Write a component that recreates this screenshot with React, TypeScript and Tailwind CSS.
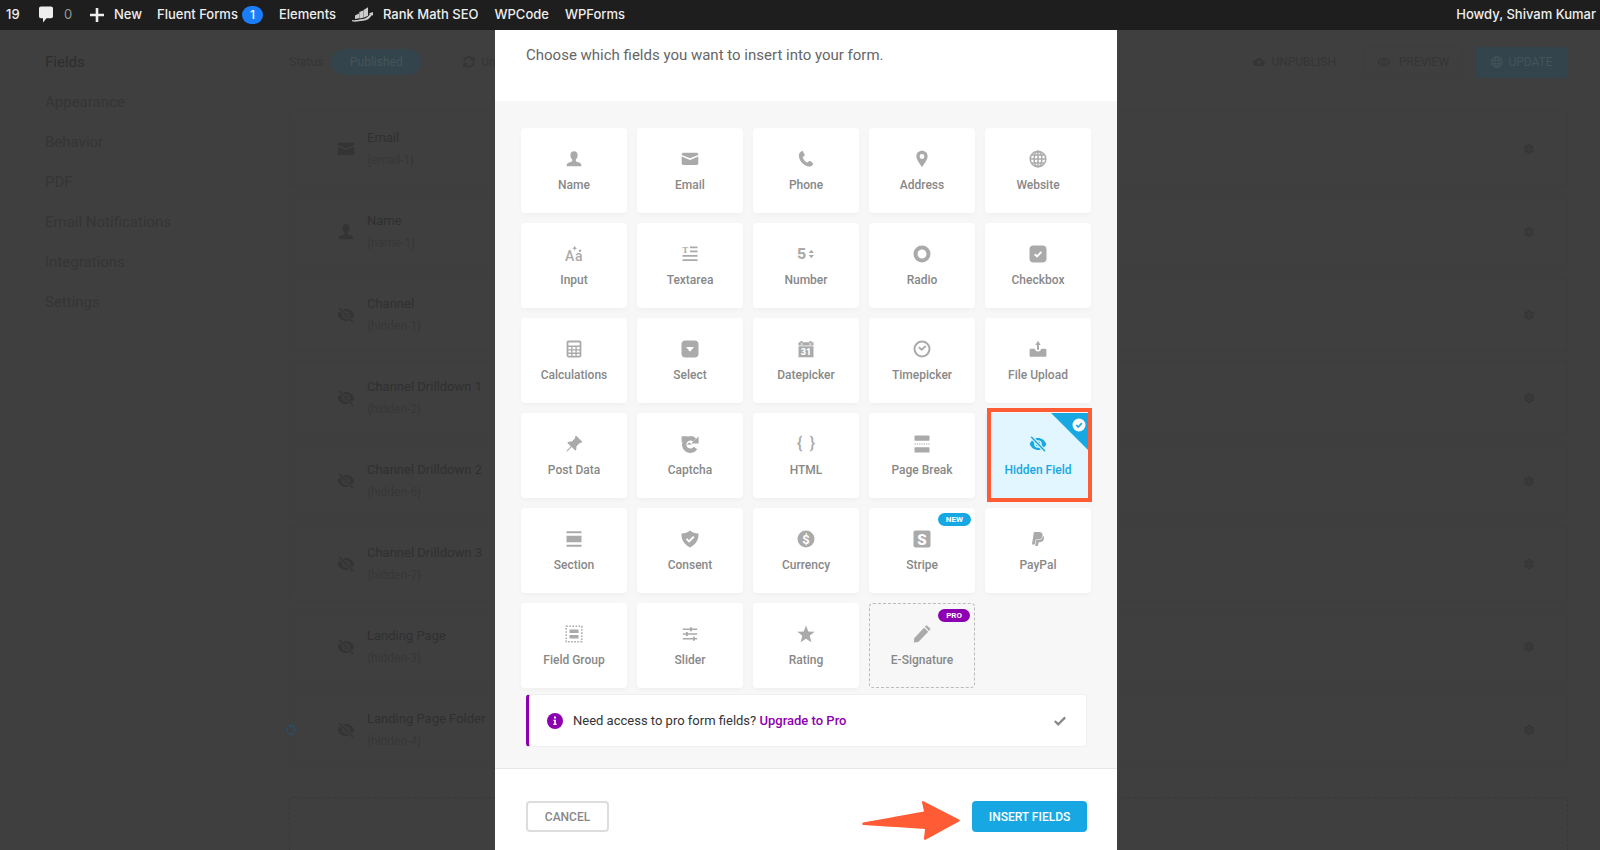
import { useState } from 'react';
import type { ReactNode } from 'react';
import { BsPinAngleFill } from 'react-icons/bs';
import { FaPaypal, FaSyncAlt } from 'react-icons/fa';
import { MdCloudUpload, MdLanguage, MdOutlineRemoveRedEye, MdOutlineSettings, MdOutlineSync } from 'react-icons/md';

// Define types
interface FieldType {
    label: string;
    icon: ReactNode;
    tag?: 'new' | 'pro';
}

interface FormField {
    title: string;
    slug: string;
    icon: ReactNode;
    synced?: boolean;
}

const Icon = ({ children }: { children: ReactNode }) => (
    <svg viewBox="0 0 18 18" className="w-[18px] h-[18px] shrink-0 overflow-visible" fill="currentColor" aria-hidden="true">
        {children}
    </svg>
);

const personIcon = (
    <Icon>
        <path d="M9 1.300c2.200 0 3.600 1.600 3.600 3.900 0 1.700-.7 3.300-1.800 4.300v1.300c0 .5.3.8.8 1l3 1c1.100.4 1.700 1.200 1.700 2.400v1H1.700v-1c0-1.200.6-2 1.700-2.400l3-1c.5-.2.8-.5.8-1V9.500C6.100 8.500 5.400 6.900 5.400 5.200 5.400 2.900 6.800 1.300 9 1.300z" />
    </Icon>
);

const emailIcon = (
    <Icon>
        <path d="M2.500 2.700h13c1 0 1.800.8 1.800 1.700v.6L9 8.300.7 5v-.6c0-.9.8-1.700 1.800-1.700z" />
        <path d="M.7 6.600 9 9.900l8.300-3.300v6.700c0 1-.8 1.800-1.800 1.800h-13c-1 0-1.800-.8-1.800-1.800z" />
    </Icon>
);

const hiddenIcon = (
    <Icon>
        <path
            fillRule="evenodd"
            d="M9 3c3.600 0 6.800 2.300 8.300 6-1.500 3.700-4.700 6-8.300 6S2.200 12.700.7 9C2.200 5.300 5.400 3 9 3zm0 2.200a3.800 3.800 0 1 0 0 7.600 3.800 3.800 0 0 0 0-7.600z"
        />
        <circle cx="9" cy="9" r="2.400" />
        <path d="M2.600 2.200 15.600 15.800" stroke="var(--cut)" strokeWidth="3.600" />
        <path d="M2.600 2.200 15.600 15.800" stroke="currentColor" strokeWidth="1.500" strokeLinecap="round" />
    </Icon>
);

const fieldTypes: FieldType[] = [
    { label: 'Name', icon: personIcon },
    { label: 'Email', icon: emailIcon },
    {
        label: 'Phone',
        icon: (
            <Icon>
                <path d="M4.600 1.200c.6-.3 1.100-.2 1.400.3l1.600 3c.3.600.2 1.100-.3 1.400l-1.200.9c-.3.300-.4.600-.2 1 .7 1.900 2.100 3.600 4 4.600.4.200.8.1 1-.2l1-1c.4-.4.9-.4 1.400-.1l2.400 1.900c.5.400.5.900.2 1.400-1 1.700-2.800 2.500-4.900 2C6.300 15.300 2 10.500 1.900 5.700c0-2 .9-3.700 2.700-4.500z" />
            </Icon>
        ),
    },
    {
        label: 'Address',
        icon: (
            <Icon>
                <path fillRule="evenodd" d="M9 .8c3.200 0 5.600 2.300 5.600 5.500 0 3.700-3.300 7.200-5.600 11-2.300-3.800-5.600-7.300-5.600-11C3.400 3.100 5.800.8 9 .8zm0 3.300a2.400 2.400 0 1 0 0 4.800 2.400 2.400 0 0 0 0-4.800z" />
            </Icon>
        ),
    },
    {
        label: 'Website',
        icon: (
            <Icon>
                <g fill="none" stroke="currentColor" strokeWidth="1.500">
                    <circle cx="9" cy="9" r="7.800" />
                    <ellipse cx="9" cy="9" rx="3.900" ry="7.800" />
                    <path d="M9 1v16M1 9h16M2.300 5h13.400M2.300 13h13.400" />
                </g>
            </Icon>
        ),
    },
    {
        label: 'Input',
        icon: (
            <Icon>
                <text x="0" y="16" fontSize="14" fontFamily="Roboto, sans-serif" fontWeight="500">A</text>
                <text x="10" y="16" fontSize="14" fontFamily="Roboto, sans-serif" fontWeight="500">a</text>
                <path d="m9.700.8.8 1.700 1.700.8-1.700.8-.8 1.700-.8-1.700-1.700-.8 1.700-.8z" />
                <circle cx="15" cy="5.700" r="1.200" />
            </Icon>
        ),
    },
    {
        label: 'Textarea',
        icon: (
            <Icon>
                <text x="1.200" y="7.500" fontSize="9" fontFamily="Liberation Serif, serif" fontWeight="700">T</text>
                <path d="M9 1.500h7.500v1.700H9zM9 5.600h7.500v1.700H9zM1.500 10h15v1.800h-15zM1.500 14.300h15v1.800h-15z" />
            </Icon>
        ),
    },
    {
        label: 'Number',
        icon: (
            <Icon>
                <text x="0" y="14" fontSize="14" fontFamily="Inter, sans-serif" fontWeight="800">5</text>
                <path d="m14.300 4.700 2.600 3.300h-5.200zM14.300 13.300 11.700 10h5.200z" />
            </Icon>
        ),
    },
    {
        label: 'Radio',
        icon: <Icon><circle cx="9" cy="9" r="6.500" fill="none" stroke="currentColor" strokeWidth="4" /></Icon>,
    },
    {
        label: 'Checkbox',
        icon: (
            <Icon>
                <rect x=".5" y=".5" width="17" height="17" rx="4" />
                <path d="m5.700 9.200 2.400 2.300 4.300-4.600" fill="none" stroke="#fff" strokeWidth="1.900" />
            </Icon>
        ),
    },
    {
        label: 'Calculations',
        icon: (
            <Icon>
                <path
                    fillRule="evenodd"
                    d="M3.500.6h11c1 0 1.900.8 1.900 1.800v13.200c0 1-.9 1.800-1.900 1.800h-11c-1 0-1.900-.8-1.900-1.800V2.400c0-1 .9-1.800 1.900-1.800zM3.400 2.400V5.600h11.200V2.400zM3.400 7v2.300h2.700V7zm4.100 0v2.300h2.900V7zm4.300 0v2.300h2.800V7zM3.400 10.600v2h2.700v-2zm4.100 0v2h2.900v-2zm4.300 0v2h2.800v-2zM3.400 13.900v1.900h2.700v-1.900zm4.100 0v1.900h2.900v-1.900zm4.300 0v1.900h2.800v-1.900z"
                />
            </Icon>
        ),
    },
    {
        label: 'Select',
        icon: (
            <Icon>
                <rect x=".5" y=".5" width="17" height="17" rx="4" />
                <path d="M5 7h8l-4 4.700z" fill="#fff" />
            </Icon>
        ),
    },
    {
        label: 'Datepicker',
        icon: (
            <Icon>
                <path fillRule="evenodd" d="M1.500 2.300h2V.9h2v1.400h7V.9h2v1.400h2v3.100h-15zM3.700 3.500v.9h2v-.9zm8.600 0v.9h2v-.9z" />
                <path d="M1.500 6.300h15v11h-15z" />
                <text x="9" y="15" fontSize="9" fontFamily="Roboto, sans-serif" fontWeight="900" textAnchor="middle" fill="#fff">31</text>
            </Icon>
        ),
    },
    {
        label: 'Timepicker',
        icon: (
            <Icon>
                <g fill="none" stroke="currentColor">
                    <circle cx="9" cy="9" r="7.500" strokeWidth="2" />
                    <path d="M5.800 7.200 8.700 9.700l4-3.700" strokeWidth="1.900" />
                </g>
            </Icon>
        ),
    },
    {
        label: 'File Upload',
        icon: (
            <Icon>
                <path d="m9 .8 2.700 4.200H10v4.800H8V5H6.300z" />
                <path d="M1.500 8.800h4.300c.3 1.600 1.500 2.600 3.200 2.600s2.900-1 3.200-2.600h4.300c.5 0 .9.4.9.9v6.100c0 .5-.4.9-.9.9h-15c-.5 0-.9-.4-.9-.9V9.700c0-.5.4-.9.9-.9z" />
            </Icon>
        ),
    },
    { label: 'Post Data', icon: <BsPinAngleFill className="w-[18px] h-[18px]" /> },
    {
        label: 'Captcha',
        icon: (
            <Icon>
                <path d="M14.500 13A6.200 6.200 0 1 1 13.600 5" fill="none" stroke="currentColor" strokeWidth="4.400" />
                <path d="M17.600 1.600v6.800h-7.400zM.6 7.500V1.200h6.300zM5.900 9.800 8.300 7.200l2.400 2.600z" />
            </Icon>
        ),
    },
    {
        label: 'HTML',
        icon: (
            <Icon>
                <text x="0" y="14" fontSize="16" fontFamily="Roboto, sans-serif" fontWeight="500">{'{'}</text>
                <text x="18" y="14" fontSize="16" fontFamily="Roboto, sans-serif" fontWeight="500" textAnchor="end">{'}'}</text>
            </Icon>
        ),
    },
    {
        label: 'Page Break',
        icon: (
            <Icon>
                <rect x="1.500" y=".5" width="15" height="5.300" rx=".6" />
                <rect x="1.500" y="12.200" width="15" height="5.300" rx=".6" />
                <path d="M1.500 9h15" stroke="currentColor" strokeWidth="1.200" strokeDasharray="1.300 1" />
            </Icon>
        ),
    },
    { label: 'Hidden Field', icon: hiddenIcon },
    {
        label: 'Section',
        icon: <Icon><path d="M1.500 1.300h15v1.900h-15zM1.500 5.800h15v6.400h-15zM1.500 14.800h15v1.900h-15z" /></Icon>,
    },
    {
        label: 'Consent',
        icon: (
            <Icon>
                <path d="M9 .4c2.200 2 5 3 8.500 3.100.3 6-2.100 10.800-8.500 14C2.600 14.300.2 9.500.5 3.500 4 3.400 6.800 2.400 9 .4z" />
                <path d="m5.500 8.900 2.600 2.600 4.700-4.900" fill="none" stroke="#fff" strokeWidth="1.900" />
            </Icon>
        ),
    },
    {
        label: 'Currency',
        icon: (
            <Icon>
                <circle cx="9" cy="9" r="8.500" />
                <text x="9" y="13.500" fontSize="13" fontFamily="Roboto, sans-serif" fontWeight="700" textAnchor="middle" fill="#fff">$</text>
            </Icon>
        ),
    },
    {
        label: 'Stripe',
        tag: 'new',
        icon: (
            <Icon>
                <rect x=".5" y=".5" width="17" height="17" rx="2" />
                <text x="9" y="14.500" fontSize="15" fontFamily="Roboto, sans-serif" fontWeight="900" textAnchor="middle" fill="#fff">S</text>
            </Icon>
        ),
    },
    { label: 'PayPal', icon: <FaPaypal className="w-4 h-[18px] py-px" /> },
    {
        label: 'Field Group',
        icon: (
            <Icon>
                <rect x="1.200" y="1.200" width="15.600" height="15.600" fill="none" stroke="currentColor" strokeWidth="1.500" strokeDasharray="1.600 1.500" />
                <path d="M4.500 4.500h9v3.400h-9zM4.500 10.100h9v3.400h-9z" />
            </Icon>
        ),
    },
    {
        label: 'Slider',
        icon: (
            <Icon>
                <path d="M1.800 3.400h14.400V5H1.800zM1.800 8.200h14.400v1.600H1.800zM1.800 13h14.400v1.600H1.800zM9 2.200h1.900v4.100H9zM4.900 7h1.900v4.100H4.900zM12 11.700h1.900v4.100H12z" />
            </Icon>
        ),
    },
    {
        label: 'Rating',
        icon: <Icon><path d="m9 .4 2.300 6 6.300.3-4.900 4 1.700 6.600L9 13.800l-5.400 3.500 1.700-6.600-4.900-4 6.300-.3z" /></Icon>,
    },
    {
        label: 'E-Signature',
        tag: 'pro',
        icon: (
            <Icon>
                <path d="M1.200 13.200 11 2.700l4.200 4.100-9.900 10.300-4.500.5zM11.900 1.800l.9-.9c.5-.5 1.200-.5 1.700 0l2.400 2.400c.5.5.5 1.200 0 1.700l-.9.9z" />
            </Icon>
        ),
    },
];

const formFields: FormField[] = [
    { title: 'Email', slug: '{email-1}', icon: emailIcon },
    { title: 'Name', slug: '{name-1}', icon: personIcon },
    { title: 'Channel', slug: '{hidden-1}', icon: hiddenIcon },
    { title: 'Channel Drilldown 1', slug: '{hidden-2}', icon: hiddenIcon },
    { title: 'Channel Drilldown 2', slug: '{hidden-6}', icon: hiddenIcon },
    { title: 'Channel Drilldown 3', slug: '{hidden-7}', icon: hiddenIcon },
    { title: 'Landing Page', slug: '{hidden-3}', icon: hiddenIcon },
    { title: 'Landing Page Folder', slug: '{hidden-4}', icon: hiddenIcon, synced: true },
];

const sidebarLinks = ['Fields', 'Appearance', 'Behavior', 'PDF', 'Email Notifications', 'Integrations', 'Settings'];

function AdminBar() {
    return (
        <header className="flex items-center h-[30px] shrink-0 pb-px pl-1.5 pr-1 bg-[#1e1e1e] text-[#eee] text-[13px] font-medium font-[Inter,sans-serif] whitespace-nowrap">
            <a href="#updates" className="w-8">19</a>
            <a href="#comments" className="flex items-center gap-2.5 w-[52px]">
                <svg viewBox="0 0 16 17" className="w-4 h-[17px]" fill="currentColor" aria-hidden="true">
                    <path d="M3 .5h10c1.200 0 2 .8 2 2v7.700c0 1.200-.8 2-2 2H8.500L5 16.500v-4.300H3c-1.200 0-2-.8-2-2V2.500c0-1.200.8-2 2-2z" />
                </svg>
                <span className="font-normal text-[#999]">0</span>
            </a>
            <a href="#new" className="flex items-center gap-2.5">
                <svg viewBox="0 0 14 14" className="w-3.5 h-3.5" aria-hidden="true">
                    <path d="M7 0v14M0 7h14" stroke="currentColor" strokeWidth="2.600" />
                </svg>
                New
            </a>
            <a href="#fluent-forms" className="flex items-center gap-1 ml-[15px]">
                Fluent Forms
                <span className="flex items-center justify-center w-[21px] h-[18px] rounded-full bg-[#1a7efb] text-xs text-white">1</span>
            </a>
            <a href="#elements" className="ml-4">Elements</a>
            <a href="#rank-math" className="flex items-center gap-2.5 ml-4">
                <svg viewBox="0 0 21 15" className="w-[21px] h-[15px]" fill="#ccc" aria-hidden="true">
                    <path d="M3 8.500 7 6.500v4.800l-4 .7zM7.300 5l4-1.500v7.300l-4 .7zM11.600 3 16 .3v8.500l-4.400 2z" />
                    <path d="M0 13c3.500 1 7-1 10.500-1 3.500-.3 6-2.500 7.500-5l-1.200-.6L21 5v3.800l-1.100-.8c-2 3.500-5 5.600-9 5.800-3.900.200-7.400 1.700-10.900.500z" />
                </svg>
                Rank Math SEO
            </a>
            <a href="#wpcode" className="ml-4">WPCode</a>
            <a href="#wpforms" className="ml-4">WPForms</a>
            <a href="#profile" className="ml-auto">Howdy, Shivam Kumar</a>
        </header>
    );
}

function Builder() {
    return (
        <div className="flex flex-1 bg-[#3f3f3f] text-[#333] [--cut:#3f3f3f]">
            <nav className="w-[257px] shrink-0 pl-[45px] pt-3">
                <ul>
                    {sidebarLinks.map((link, i) => (
                        <li key={link}>
                            <a href="#builder" className={`block h-10 leading-10 text-[15px] ${i === 0 ? 'text-[#2e2e2e]' : 'text-[#353535]'}`}>{link}</a>
                        </li>
                    ))}
                </ul>
            </nav>

            <div className="flex flex-col flex-1 pr-8">
                <div className="flex items-center h-16 pl-8 text-xs text-[#353535]">
                    <span>Status</span>
                    <span className="flex items-center justify-center w-[90px] h-[26px] ml-2 rounded-full bg-[#33444c] text-[#46545a]">Published</span>
                    <span className="flex items-center gap-1.5 ml-[42px]">
                        <FaSyncAlt className="w-3 h-3" />
                        Un
                    </span>
                    <button className="flex items-center gap-1.5 ml-auto">
                        <MdCloudUpload className="w-3 h-3" />
                        UNPUBLISH
                    </button>
                    <button className="flex items-center justify-center gap-2 w-[100px] h-[30px] ml-[27px] rounded border border-[#3d3d3d]">
                        <MdOutlineRemoveRedEye className="w-3.5 h-3.5" />
                        PREVIEW
                    </button>
                    <button className="flex items-center justify-center gap-1 w-[93px] h-[31px] ml-3 rounded bg-[#33444c] text-[#46545a]">
                        <MdLanguage className="w-3.5 h-3.5" />
                        UPDATE
                    </button>
                </div>

                <ul className="flex flex-col gap-2 pl-8 mt-[17px]">
                    {formFields.map((field) => (
                        <li key={field.slug} className="relative flex items-center h-[75px] pl-[47px] pr-8 rounded border border-[#3d3d3d]">
                            {field.synced && <MdOutlineSync className="absolute -left-1.5 w-3.5 h-3.5 text-[#25526a]" />}
                            <span className="text-[#343434]">{field.icon}</span>
                            <div className="flex flex-col ml-3">
                                <span className="text-[13px] leading-[23px] text-[#303030]">{field.title}</span>
                                <span className="text-xs leading-[23px] text-[#373737]">{field.slug}</span>
                            </div>
                            <button className="ml-auto" aria-label={`${field.title} settings`}>
                                <MdOutlineSettings className="w-3 h-3 text-[#343434]" />
                            </button>
                        </li>
                    ))}
                </ul>

                <div className="flex-1 min-h-[52px] ml-8 mt-[30px] border border-b-0 border-dashed border-[#383838] rounded-t" />
            </div>
        </div>
    );
}

export default function App() {
    const [selected, setSelected] = useState('Hidden Field');

    // Render a selectable tile for a field type
    const renderTile = (field: FieldType) => {
        const active = field.label === selected;
        const pro = field.tag === 'pro';

        return (
            <button
                key={field.label}
                onClick={() => setSelected(field.label)}
                aria-pressed={active}
                className={`relative flex flex-col items-center justify-center gap-[9px] h-[85px] pt-0.5 rounded text-xs leading-4 font-medium ${
                    active
                        ? 'bg-[#e1f6ff] text-[#17a8e3] [--cut:#e1f6ff]'
                        : pro
                            ? 'border border-dashed border-[#bbb] text-[#888] [--cut:#f7f7f7]'
                            : 'bg-white text-[#888] shadow-[0_2px_4px_rgba(0,0,0,0.03)] [--cut:#ffffff]'
                }`}
            >
                <span className={active ? 'text-[#17a8e3]' : 'text-[#aaa]'}>{field.icon}</span>
                {field.label}
                {active && (
                    <>
                        <svg viewBox="0 0 40 40" className="absolute top-0 right-0 w-10 h-10" aria-hidden="true">
                            <path d="M0 0h40v40z" fill="#17a8e3" />
                            <circle cx="28" cy="12" r="6.500" fill="#fff" />
                            <path d="m25.200 12 2 2 3.700-3.900" fill="none" stroke="#17a8e3" strokeWidth="1.600" />
                        </svg>
                        <span className="absolute left-0.5 -right-px -top-[5px] -bottom-1 border-4 border-[#ff5c35]" />
                    </>
                )}
                {field.tag && (
                    <span className={`absolute top-[5px] right-1 px-2 rounded-full text-[8px] leading-[13px] font-bold text-white ${pro ? 'bg-[#8d00b1]' : 'bg-[#17a8e3]'}`}>
                        {field.tag.toUpperCase()}
                    </span>
                )}
            </button>
        );
    };

    return (
        <div className="flex flex-col min-h-screen font-[Roboto,sans-serif]">
            <AdminBar />
            <Builder />

            {/* Insert fields dialog */}
            <div className="fixed inset-x-0 top-[30px] bottom-0 flex justify-center pl-3">
                <div role="dialog" aria-label="Insert Fields" className="flex flex-col w-full max-w-[622px] bg-white">
                    <p className="h-[71px] pt-[13px] pl-[31px] text-[15px] leading-6 text-[#666]">
                        Choose which fields you want to insert into your form.
                    </p>

                    <div className="px-[26px] pt-[27px] pb-[21px] bg-[#f7f7f7] border-b border-[#e6e6e6]">
                        <div className="grid grid-cols-5 gap-2.5">
                            {fieldTypes.map(renderTile)}
                        </div>

                        <div className="flex items-center h-[53px] ml-[5px] mr-1 mt-1.5 pl-[18px] pr-5 rounded border border-[#f0f0f0] border-l-[3px] border-l-[#8d00b1] bg-white text-[13px] text-[#333]">
                            <svg viewBox="0 0 16 16" className="w-4 h-4 mr-2.5" aria-hidden="true">
                                <circle cx="8" cy="8" r="8" fill="#8d00b1" />
                                <path d="M6.500 6.700h2.400v4h.8v1.300H6.300v-1.300h.9V8h-.7zM7 3.600h1.900v1.900H7z" fill="#fff" />
                            </svg>
                            <p>
                                Need access to pro form fields?{' '}
                                <a href="#upgrade" className="font-medium text-[#8d00b1]">Upgrade to Pro</a>
                            </p>
                            <button className="ml-auto" aria-label="Dismiss">
                                <svg viewBox="0 0 12 10" className="w-3 h-2.5" fill="none" stroke="#888" strokeWidth="2.200" aria-hidden="true">
                                    <path d="m.8 5 3.400 3.400L11.200 1.400" />
                                </svg>
                            </button>
                        </div>
                    </div>

                    <div className="flex items-start pl-[31px] pr-[30px] pt-8">
                        <button className="w-[83px] h-[31px] rounded border-2 border-[#ddd] text-xs font-medium text-[#888]">CANCEL</button>
                        <svg viewBox="0 0 98 40" className="w-[98px] h-10 ml-auto mr-3" aria-hidden="true">
                            <path d="M1 21.500 62 10.500 60 1Q60-.5 62 .5L97 18.500Q98.500 19.500 97 20.500L64 38.500Q61.500 39.500 62 37L63 28 1 24Q-.5 22.500 1 21.500z" fill="#ff5c35" />
                        </svg>
                        <button className="w-[115px] h-[31px] rounded bg-[#17a8e3] text-xs font-medium text-white">INSERT FIELDS</button>
                    </div>
                </div>
            </div>
        </div>
    );
}
